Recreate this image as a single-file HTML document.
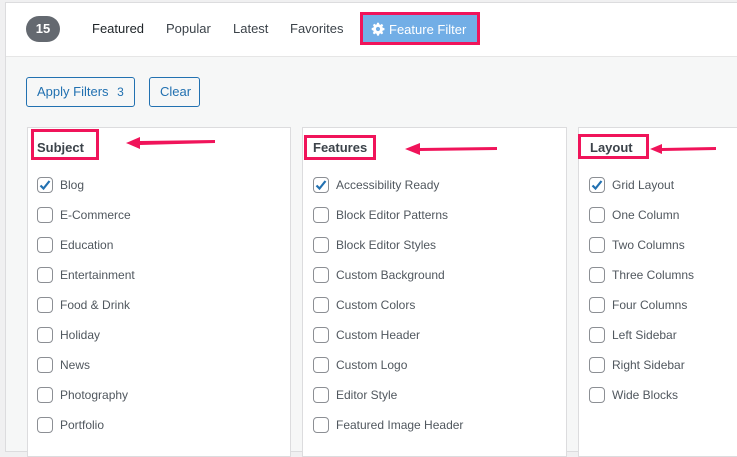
<!DOCTYPE html><html><head><style>
*{margin:0;padding:0;box-sizing:border-box}
body{width:737px;height:446px;overflow:hidden;background:#f0f0f1;font-family:"Liberation Sans",sans-serif;position:relative}
.a{position:absolute;white-space:nowrap}
.wrap{left:5px;top:2px;width:740px;height:450px;border:1px solid #dcdcde;background:#f6f7f7}
.hdr{left:6px;top:3px;width:740px;height:54px;background:#fff;border-bottom:1px solid #e6e6e6}
.nav{top:21px;font-size:13px;color:#3c434a}
.btn{border:1px solid #2271b1;border-radius:3px;color:#2271b1;font-size:13px;background:#f6f7f7;height:30px;line-height:28px;padding:0 10px}
.panel{top:127px;background:#fff;border:1px solid #dcdcde;height:330px}
.pink{border:3px solid #f0145a}
.h{font-size:13px;font-weight:bold;color:#3c434a}
.cb{width:16px;height:16px;border:1px solid #8c8f94;border-radius:4px;background:#fff}
.lbl{font-size:12px;color:#50575e}
</style></head><body>
<div class="a wrap"></div>
<div class="a hdr"></div>
<div class="a" style="left:26px;top:16px;width:34px;height:26px;border-radius:13px;background:#646970;color:#fff;font-size:13px;font-weight:bold;text-align:center;line-height:26px">15</div>
<div class="a nav" style="left:92px;color:#1d2327">Featured</div>
<div class="a nav" style="left:166px">Popular</div>
<div class="a nav" style="left:233px">Latest</div>
<div class="a nav" style="left:290px">Favorites</div>
<div class="a pink" style="left:360px;top:12px;width:120px;height:33px;background:#72aee6"></div>
<div class="a" style="left:371px;top:21px;color:#fff;font-size:13px;line-height:17px">
<svg width="14" height="14" viewBox="0 0 20 20" style="vertical-align:-2px;margin-right:4px"><path fill="#fff" d="M8.6 1h2.8l.5 2.4 1.6.7 2-1.4 2 2-1.4 2 .7 1.6 2.4.5v2.8l-2.4.5-.7 1.6 1.4 2-2 2-2-1.4-1.6.7-.5 2.4H8.6l-.5-2.4-1.6-.7-2 1.4-2-2 1.4-2-.7-1.6L1 11.4V8.6l2.4-.5.7-1.6-1.4-2 2-2 2 1.4 1.6-.7zM10 7a3 3 0 100 6 3 3 0 000-6z"/></svg>Feature Filter</div>
<div class="a btn" style="left:26px;top:77px;width:109px">Apply Filters <span style="margin-left:5px;font-size:12px">3</span></div>
<div class="a btn" style="left:149px;top:77px;width:51px">Clear</div>

<div class="a panel" style="left:27px;width:264px"></div>
<div class="a panel" style="left:302px;width:265px"></div>
<div class="a panel" style="left:578px;width:170px"></div>

<div class="a pink" style="left:31px;top:129px;width:68px;height:31px"></div>
<div class="a h" style="left:37px;top:140px">Subject</div>
<div class="a pink" style="left:304px;top:135px;width:72px;height:25px"></div>
<div class="a h" style="left:313px;top:140px">Features</div>
<div class="a pink" style="left:578px;top:134px;width:71px;height:25px"></div>
<div class="a h" style="left:590px;top:140px">Layout</div>

<svg class="a" style="left:0;top:0" width="737" height="446">
<g fill="#f0145a"><polygon points="215,140 140,141 140,137 126,143 140,149 140,145 215,143"/>
<polygon points="497,147 420,148 420,143 405,149 420,155 420,151 497,150"/>
<polygon points="716,147 662,148 662,144 650,149 662,154 662,151 716,150"/></g></svg>

<div id="lists"></div>
<script>
var cols=[[37,["Blog","E-Commerce","Education","Entertainment","Food & Drink","Holiday","News","Photography","Portfolio"]],
[313,["Accessibility Ready","Block Editor Patterns","Block Editor Styles","Custom Background","Custom Colors","Custom Header","Custom Logo","Editor Style","Featured Image Header"]],
[589,["Grid Layout","One Column","Two Columns","Three Columns","Four Columns","Left Sidebar","Right Sidebar","Wide Blocks"]]];
var h="";
cols.forEach(function(c){c[1].forEach(function(t,i){var y=177+i*30;
h+='<div class="a cb" style="left:'+c[0]+'px;top:'+y+'px">'+(i==0?'<svg width="14" height="14" viewBox="0 0 14 14"><path d="M2.5 7.5l3 3 6-7.5" stroke="#2271b1" stroke-width="2.2" fill="none"/></svg>':'')+'</div>';
h+='<div class="a lbl" style="left:'+(c[0]+23)+'px;top:'+(y+1)+'px">'+t.replace("&","&amp;")+'</div>';});});
document.getElementById("lists").innerHTML=h;
</script>
</body></html>
